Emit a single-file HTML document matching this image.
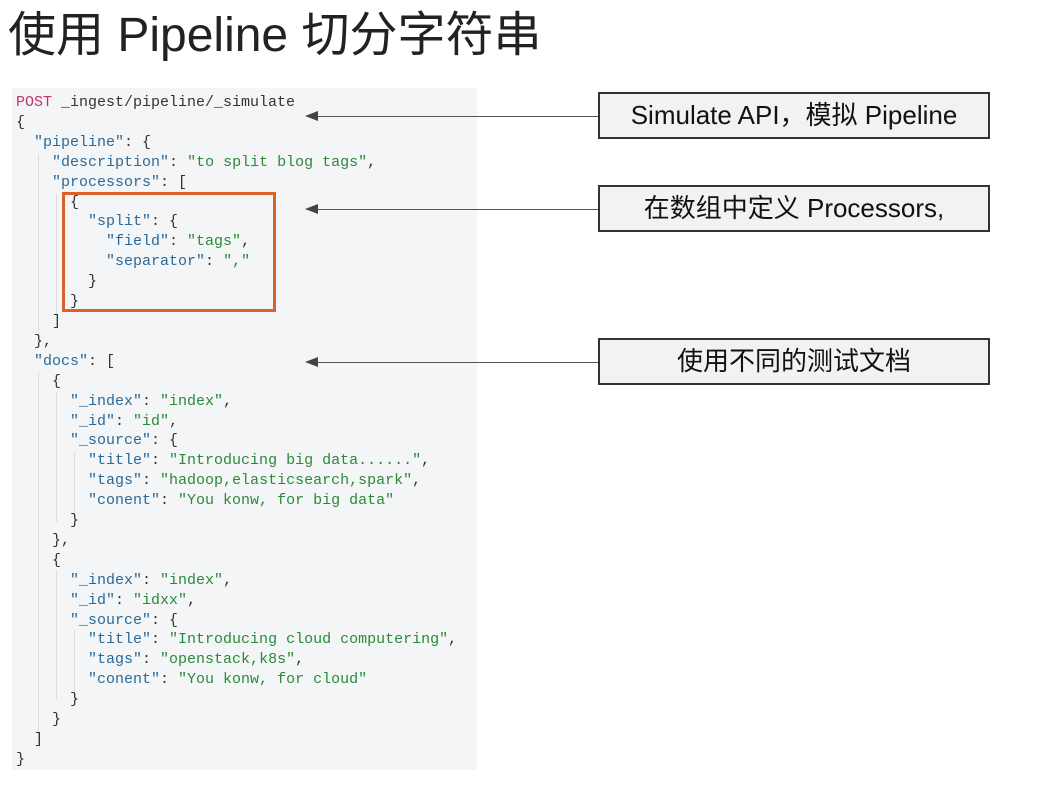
<!DOCTYPE html>
<html><head><meta charset="utf-8"><style>
body{margin:0;width:1050px;height:790px;background:#fff;position:relative;overflow:hidden;font-family:"Liberation Sans","Noto Sans CJK SC",sans-serif}
.title{position:absolute;left:8px;top:8px;font-size:48px;color:#222;line-height:56px;white-space:nowrap}
.panel{position:absolute;left:12px;top:88px;width:465px;height:682px;background:#f4f5f6}
pre{position:absolute;left:16px;top:93px;margin:0;font-family:"Liberation Mono",monospace;font-size:15px;line-height:19.9px;color:#333}
.k{color:#2a6a99}.s{color:#2a8a3a}.m{color:#c0336a}
.ob{position:absolute;left:62px;top:192px;width:208px;height:114px;border:3px solid #d9622b}
.box{position:absolute;left:598px;width:388px;height:43px;border:2px solid #333;background:#f2f2f2;font-size:26px;line-height:43px;text-align:center;color:#111;white-space:nowrap}
.ar{position:absolute;left:318px;width:280px;height:1px;background:#555}
.ah{position:absolute;left:305px;width:0;height:0;border-top:5px solid transparent;border-bottom:5px solid transparent;border-right:13px solid #444}
.g{position:absolute;width:1px;background:#ddd}
</style></head><body>
<div class="title">使用 Pipeline 切分字符串</div>
<div class="panel"></div>
<div class="g" style="left:38px;top:154px;height:180px"></div>
<div class="g" style="left:56px;top:194px;height:120px"></div>
<div class="g" style="left:38px;top:372px;height:370px"></div>
<div class="g" style="left:56px;top:392px;height:130px"></div>
<div class="g" style="left:74px;top:452px;height:70px"></div>
<div class="g" style="left:56px;top:570px;height:130px"></div>
<div class="g" style="left:74px;top:630px;height:70px"></div>
<pre><span class="m">POST</span> _ingest/pipeline/_simulate
{
  <span class="k">"pipeline"</span>: {
    <span class="k">"description"</span>: <span class="s">"to split blog tags"</span>,
    <span class="k">"processors"</span>: [
      {
        <span class="k">"split"</span>: {
          <span class="k">"field"</span>: <span class="s">"tags"</span>,
          <span class="k">"separator"</span>: <span class="s">","</span>
        }
      }
    ]
  },
  <span class="k">"docs"</span>: [
    {
      <span class="k">"_index"</span>: <span class="s">"index"</span>,
      <span class="k">"_id"</span>: <span class="s">"id"</span>,
      <span class="k">"_source"</span>: {
        <span class="k">"title"</span>: <span class="s">"Introducing big data......"</span>,
        <span class="k">"tags"</span>: <span class="s">"hadoop,elasticsearch,spark"</span>,
        <span class="k">"conent"</span>: <span class="s">"You konw, for big data"</span>
      }
    },
    {
      <span class="k">"_index"</span>: <span class="s">"index"</span>,
      <span class="k">"_id"</span>: <span class="s">"idxx"</span>,
      <span class="k">"_source"</span>: {
        <span class="k">"title"</span>: <span class="s">"Introducing cloud computering"</span>,
        <span class="k">"tags"</span>: <span class="s">"openstack,k8s"</span>,
        <span class="k">"conent"</span>: <span class="s">"You konw, for cloud"</span>
      }
    }
  ]
}</pre>
<div class="ob"></div>
<div class="ar" style="top:116px"></div><div class="ah" style="top:111px"></div>
<div class="ar" style="top:209px"></div><div class="ah" style="top:204px"></div>
<div class="ar" style="top:362px"></div><div class="ah" style="top:357px"></div>
<div class="box" style="top:92px">Simulate API，模拟 Pipeline</div>
<div class="box" style="top:185px">在数组中定义 Processors,</div>
<div class="box" style="top:338px">使用不同的测试文档</div>
</body></html>
